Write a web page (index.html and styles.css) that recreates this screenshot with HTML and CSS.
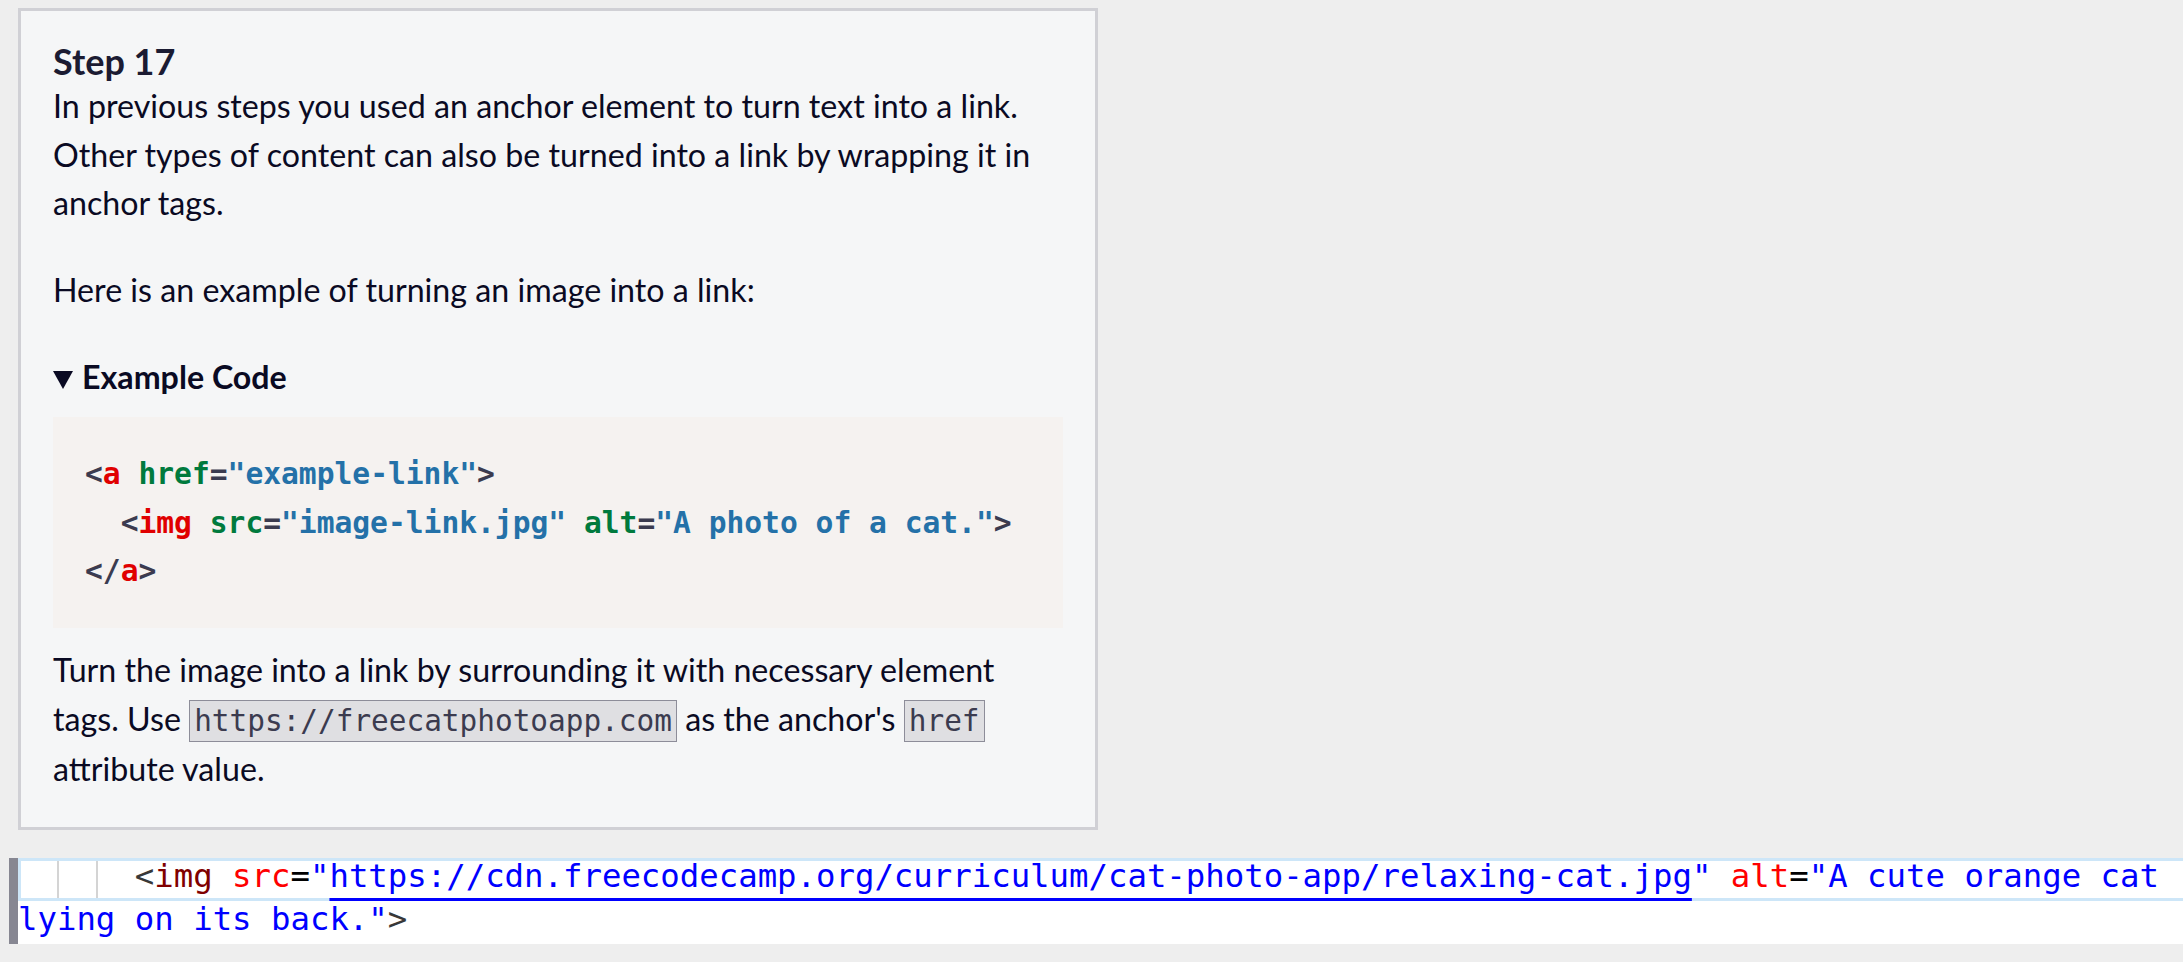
FILE: index.html
```html
<!DOCTYPE html>
<html lang="en">
<head>
<meta charset="utf-8">
<title>Step 17</title>
<link rel="stylesheet" href="styles.css">
</head>
<body>
<div class="page">
  <section class="panel">
    <h2 class="step-title">Step 17</h2>
    <p class="desc">In previous steps you used an anchor element to turn text into a link. Other types of content can also be turned into a link by wrapping it in anchor tags.</p>
    <p class="desc">Here is an example of turning an image into a link:</p>
    <details open class="example">
      <summary class="summary"><span class="tri"></span>Example Code</summary>
      <pre class="code"><code><span class="pu">&lt;</span><span class="tg">a</span> <span class="at">href</span><span class="pu">=</span><span class="vl">"example-link"</span><span class="pu">&gt;</span>
  <span class="pu">&lt;</span><span class="tg">img</span> <span class="at">src</span><span class="pu">=</span><span class="vl">"image-link.jpg"</span> <span class="at">alt</span><span class="pu">=</span><span class="vl">"A photo of a cat."</span><span class="pu">&gt;</span>
<span class="pu">&lt;/</span><span class="tg">a</span><span class="pu">&gt;</span></code></pre>
    </details>
    <p class="desc last">Turn the image into a link by surrounding it with necessary element tags. Use <code class="ic">https://freecatphotoapp.com</code> as the anchor's <code class="ic">href</code> attribute value.</p>
  </section>

  <div class="editor">
    <div class="gutter-bar"></div>
    <div class="lines">
      <div class="row current"><span class="ed-pu">      &lt;</span><span class="ed-tg">img</span> <span class="ed-at">src</span><span class="ed-eq">=</span><span class="ed-vl">"<span class="ed-link">https://cdn.freecodecamp.org/curriculum/cat-photo-app/relaxing-cat.jpg</span>"</span> <span class="ed-at">alt</span><span class="ed-eq">=</span><span class="ed-vl">"A cute orange cat </span></div>
      <div class="row"><span class="ed-vl">lying on its back."</span><span class="ed-pu">&gt;</span></div>
    </div>
  </div>
</div>
</body>
</html>
```

FILE: styles.css
```css
* {
  box-sizing: border-box;
}

html,
body {
  margin: 0;
  padding: 0;
}

body {
  width: 2183px;
  height: 962px;
  overflow: hidden;
  background: #eeeeee;
  font-family: Lato, "Noto Sans", sans-serif;
}

.page {
  padding-top: 8px;
}

/* ---------- instruction panel ---------- */
.panel {
  margin-left: 18px;
  width: 1080px;
  height: 822px;
  border: 3px solid #d0d0d5;
  background: #f5f6f7;
  padding: 30px 32px 0;
  color: #0a0a23;
}

.step-title {
  margin: 0;
  font-size: 36px;
  line-height: 41px;
  font-weight: 700;
  color: #1b1b32;
}

.desc {
  margin: 0 0 38px;
  font-size: 32.2px;
  line-height: 48.64px;
}

.desc.last {
  margin-bottom: 0;
}

.example {
  margin: 0;
}

.summary {
  display: block;
  list-style: none;
  font-size: 32.2px;
  line-height: 48.64px;
  font-weight: 700;
  cursor: pointer;
}

.summary::-webkit-details-marker {
  display: none;
}

.tri {
  display: inline-block;
  width: 0;
  height: 0;
  border-left: 10px solid transparent;
  border-right: 10px solid transparent;
  border-top: 18px solid #0a0a23;
  margin-right: 9px;
  vertical-align: baseline;
}

.code {
  margin: 16px 0 18px;
  padding: 33px 32px 32px;
  background: #f5f2f0;
  font-family: "DejaVu Sans Mono", monospace;
  font-weight: 700;
  font-size: 29.6px;
  line-height: 48.64px;
  color: #3b3b4f;
  white-space: pre;
  overflow: hidden;
}

.code code {
  font-family: inherit;
}

.pu { color: #3b3b4f; }
.tg { color: #e00000; }
.at { color: #007a3d; }
.vl { color: #2471a8; }

.ic {
  font-family: "DejaVu Sans Mono", monospace;
  font-size: 29.4px;
  background: #dfdfe2;
  border: 1px solid #8d8d99;
  padding: 3px 4px;
  color: #3b3b4f;
}

/* ---------- editor ---------- */
.editor {
  display: flex;
  margin-top: 28px;
}

.gutter-bar {
  width: 9px;
  margin-left: 9px;
  background: #878792;
}

.lines {
  flex: 1;
  background: #ffffff;
  font-family: "DejaVu Sans Mono", monospace;
  font-size: 32.35px;
}

.row {
  height: 43px;
  line-height: 36px;
  white-space: pre;
  overflow: hidden;
}

.row.current {
  box-shadow:
    inset 3px 0 0 #cde6f8,
    inset 0 3px 0 #cde6f8,
    inset 0 -3px 0 #cde6f8;
  background:
    linear-gradient(#d4d4d4, #d4d4d4) 39px 3px / 2px 37px no-repeat,
    linear-gradient(#d4d4d4, #d4d4d4) 78px 3px / 2px 37px no-repeat,
    #ffffff;
}

.ed-pu { color: #383838; }
.ed-tg { color: #800000; }
.ed-at { color: #ff0000; }
.ed-eq { color: #000000; }
.ed-vl { color: #0000ff; }

.ed-link {
  text-decoration: underline;
  text-decoration-color: #0000ff;
  text-decoration-thickness: 3px;
  text-underline-offset: 11px;
}
```
